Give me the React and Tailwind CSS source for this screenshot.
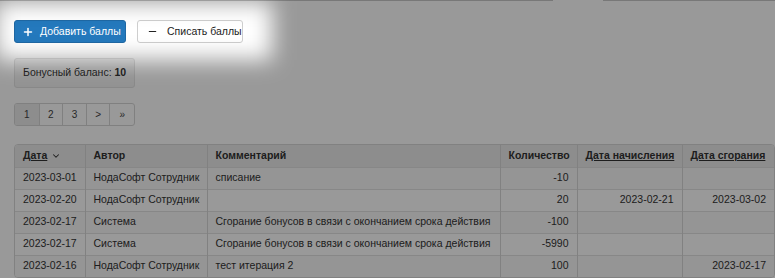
import { Plus, Minus, ChevronDown } from 'lucide-react';

const rows = [
    { date: '2023-03-01', author: 'НодаСофт Сотрудник', comment: 'списание', qty: '-10', accrued: '', expires: '' },
    { date: '2023-02-20', author: 'НодаСофт Сотрудник', comment: '', qty: '20', accrued: '2023-02-21', expires: '2023-03-02' },
    { date: '2023-02-17', author: 'Система', comment: 'Сгорание бонусов в связи с окончанием срока действия', qty: '-100', accrued: '', expires: '' },
    { date: '2023-02-17', author: 'Система', comment: 'Сгорание бонусов в связи с окончанием срока действия', qty: '-5990', accrued: '', expires: '' },
    { date: '2023-02-16', author: 'НодаСофт Сотрудник', comment: 'тест итерация 2', qty: '100', accrued: '', expires: '2023-02-17' },
];

const App = () => {
    return (
        <div className="relative w-[775px] h-[278px] overflow-hidden bg-white text-[#333] font-['Liberation_Sans',Arial,sans-serif]">
            {/* tabs border */}
            <div className="flex h-px">
                <div className="w-[553px] bg-[#c8c8c8]"></div>
                <div className="w-[50px]"></div>
                <div className="flex-1 bg-[#c8c8c8]"></div>
            </div>

            <div className="pl-[14px] pt-[19px]">
                {/* Buttons */}
                <div className="flex gap-[11px]">
                    <button className="shrink-0 whitespace-nowrap flex items-center h-[23px] w-[112px] pl-[7px] gap-[6px] bg-[#2479bd] border border-[#1f69a5] rounded-[3px] text-white text-[10.5px]">
                        <Plus className="w-[12px] h-[12px]" strokeWidth={3} />
                        <span>Добавить баллы</span>
                    </button>
                    <button className="shrink-0 whitespace-nowrap flex items-center h-[23px] w-[106px] pl-[9px] gap-[9px] bg-white border border-[#cfcfcf] rounded-[3px] text-[#222] text-[10.5px]">
                        <Minus className="w-[11px] h-[11px]" strokeWidth={2.5} />
                        <span>Списать баллы</span>
                    </button>
                </div>

                {/* Balance */}
                <div className="mt-[15px] w-[121px] h-[30px] flex items-center pl-[8px] whitespace-nowrap bg-[#f3f3f3] border border-[#e3e3e3] rounded-[3px] text-[10.5px] text-[#333]">
                    Бонусный баланс:&nbsp;<b>10</b>
                </div>

                {/* Pagination */}
                <div className="mt-[15px] flex w-[121px] h-[23px] border border-[#d6d6d6] rounded-[3px] overflow-hidden text-[10px] text-[#444]">
                    <div className="w-[24px] flex items-center justify-center bg-[#ebebeb]">1</div>
                    <div className="w-[24px] flex items-center justify-center border-l border-[#d6d6d6]">2</div>
                    <div className="w-[24px] flex items-center justify-center border-l border-[#d6d6d6]">3</div>
                    <div className="w-[24px] flex items-center justify-center border-l border-[#d6d6d6]">&gt;</div>
                    <div className="w-[25px] flex items-center justify-center border-l border-[#d6d6d6]">»</div>
                </div>

                {/* Table */}
                <div className="mt-[18px] w-[761px] border border-[#d8d8d8] rounded-[4px] overflow-hidden">
                    <table className="w-full table-fixed border-collapse text-[10.5px] text-[#333]">
                        <colgroup>
                            <col className="w-[70px]" />
                            <col className="w-[122px]" />
                            <col className="w-[293px]" />
                            <col className="w-[77px]" />
                            <col className="w-[105px]" />
                            <col />
                        </colgroup>
                        <thead className="bg-[#ececec]">
                            <tr className="h-[22px]">
                                <th className="px-[8px] text-left font-bold">
                                    <span className="inline-flex items-center gap-[4px]">
                                        <span className="underline">Дата</span>
                                        <ChevronDown className="w-[10px] h-[10px]" strokeWidth={2.5} />
                                    </span>
                                </th>
                                <th className="px-[8px] text-left font-bold border-l border-[#d8d8d8]">Автор</th>
                                <th className="px-[8px] text-left font-bold border-l border-[#d8d8d8]">Комментарий</th>
                                <th className="px-[8px] text-right font-bold border-l border-[#d8d8d8]">Количество</th>
                                <th className="px-[8px] text-left font-bold underline border-l border-[#d8d8d8] whitespace-nowrap">Дата начисления</th>
                                <th className="px-[8px] text-left font-bold underline border-l border-[#d8d8d8] whitespace-nowrap">Дата сгорания</th>
                            </tr>
                        </thead>
                        <tbody>
                            {rows.map((r, i) => (
                                <tr key={i} className={`h-[22px] border-t border-[#e2e2e2] ${i % 2 === 0 ? 'bg-[#f8f8f8]' : 'bg-white'}`}>
                                    <td className="px-[8px] whitespace-nowrap">{r.date}</td>
                                    <td className="px-[8px] whitespace-nowrap border-l border-[#d8d8d8]">{r.author}</td>
                                    <td className="px-[8px] whitespace-nowrap border-l border-[#d8d8d8]">{r.comment}</td>
                                    <td className="px-[8px] text-right border-l border-[#d8d8d8]">{r.qty}</td>
                                    <td className="px-[8px] text-right border-l border-[#d8d8d8]">{r.accrued}</td>
                                    <td className="px-[8px] text-right border-l border-[#d8d8d8]">{r.expires}</td>
                                </tr>
                            ))}
                        </tbody>
                    </table>
                </div>
            </div>

            {/* Tour overlay with spotlight */}
            <div className="absolute inset-0 pointer-events-none overflow-hidden">
                <div className="absolute left-[-4px] top-[2px] w-[276px] h-[58px] shadow-[0_0_0_800px_rgba(0,0,0,0.4)] blur-[11px]"></div>
            </div>
        </div>
    );
};

export default App;
